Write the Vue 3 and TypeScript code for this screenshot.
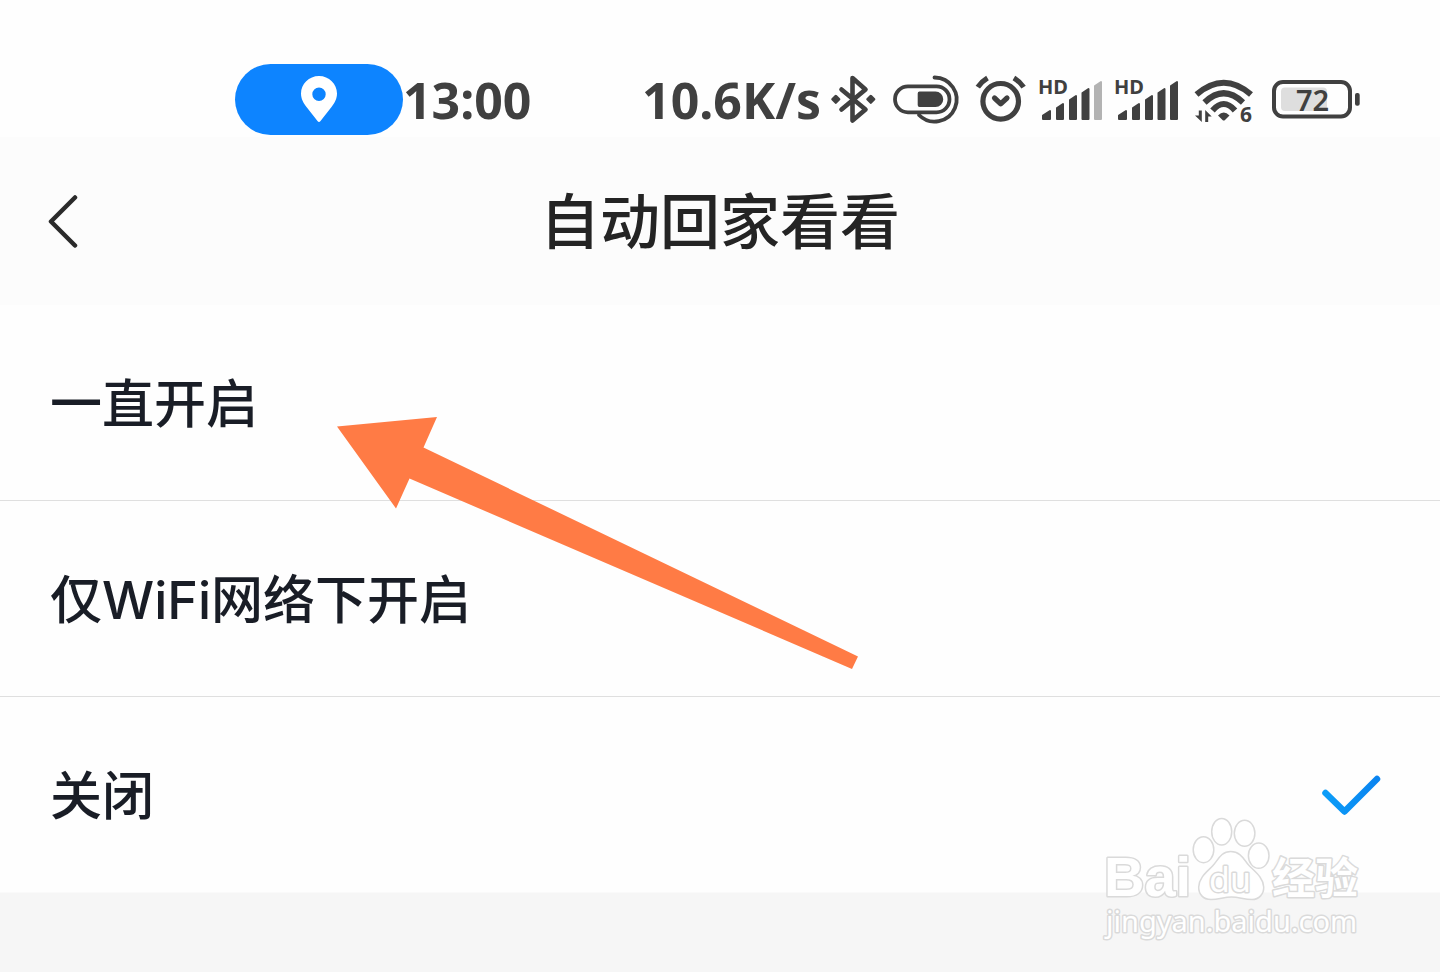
<script setup lang="ts">
import { ref } from 'vue'

interface Option {
  value: string
  label: string
}

const options: Option[] = [
  { value: 'always', label: '一直开启' },
  { value: 'wifi', label: '仅WiFi网络下开启' },
  { value: 'off', label: '关闭' },
]
const selected = ref<string>('off')

const bars: string[] = [
  'M5 47V43.500L12 39V47Z',
  'M19 47V36L25 32V47Z',
  'M32 47V28L38 24V47Z',
  'M44.500 47V21L50.500 17V47Z',
  'M57 47V14L63 10V47Z',
]
const sims: number[] = [4, 5]
</script>

<template>
  <div class="page">
    <div class="status">
      <div class="status-left">
        <span class="pill">
          <svg width="40" height="50" viewBox="0 0 40 50" aria-hidden="true">
            <path fill="#fff" fill-rule="evenodd" d="M20 1C10 1 2 9 2 18.500C2 24 4.500 28 7.500 32L18.500 46Q20 48 21.500 46L32.500 32C35.500 28 38 24 38 18.500C38 9 30 1 20 1ZM20 12.500A6.700 6.700 0 1 1 20 25.900A6.700 6.700 0 1 1 20 12.500Z" />
          </svg>
        </span>
        <span class="status-text">13:00</span>
      </div>
      <div class="status-right">
        <span class="status-text">10.6K/s</span>
        <svg width="47" height="56" viewBox="0 0 47 56" aria-hidden="true">
          <path d="M10.500 17.500L34.500 37.500L21.500 48.500V6L34.500 17.500L10.500 37.500" fill="none" stroke="#404040" stroke-width="4.600" stroke-linecap="round" stroke-linejoin="round" />
          <path d="M1.800 27.300L4.800 24.300L7.800 27.300L4.800 30.300ZM36.800 27.300L39.800 24.300L42.800 27.300L39.800 30.300Z" fill="#404040" stroke="#404040" stroke-width="3" stroke-linejoin="round" />
        </svg>
        <svg width="76" height="56" viewBox="0 0 76 56" aria-hidden="true">
          <g fill="none" stroke="#404040" stroke-width="3.800" stroke-linecap="round">
            <rect x="7" y="14.300" width="54.500" height="26" rx="13" />
            <path d="M46.500 5.500A22 22 0 1 1 31 43" />
          </g>
          <path fill="#404040" d="M31.500 19.500H47.500A7.700 7.700 0 0 1 47.500 35H31.500Q29.700 35 29.700 33V21.500Q29.700 19.500 31.500 19.500Z" />
        </svg>
        <svg width="54" height="56" viewBox="0 0 54 56" aria-hidden="true">
          <g fill="none" stroke="#404040" stroke-width="5.200" stroke-linejoin="round">
            <circle cx="26.700" cy="29.300" r="17.800" />
            <path d="M3.800 15.200Q7.500 9.500 13.500 6M39.900 6Q45.900 9.500 49.600 15.200" />
            <path d="M20.500 26L26.700 31.800L33 26" stroke-linecap="round" />
          </g>
        </svg>
        <svg v-for="active in sims" :key="active" width="66" height="56" viewBox="0 0 66 56" aria-hidden="true">
          <text class="icon-text" x="0" y="22" font-size="20">HD</text>
          <path v-for="(bar, i) in bars" :key="bar" :d="bar" :fill="i < active ? '#404040' : '#b3b3b3'" :stroke="i < active ? '#404040' : '#b3b3b3'" stroke-width="2" stroke-linejoin="round" />
        </svg>
        <svg width="68" height="56" viewBox="0 0 68 56" aria-hidden="true">
          <g fill="none" stroke="#404040" stroke-width="6">
            <path d="M6.500 22.500Q33.700 -1 61 22.500" />
            <path d="M14.500 30.500Q33.700 12 53 30.500" />
            <path d="M22.500 38.500Q33.700 25.500 45 38.500" />
          </g>
          <path fill="#404040" d="M28 43.500Q33.700 37.500 39.500 43.500L35 48Q33.700 49.200 32.500 48Z" />
          <path fill="#404040" d="M8.800 38.500H11.800V50L5 43.500H8.800ZM15.200 50H18.200V44.500H21.700L15.200 38Z" />
          <text class="icon-text" x="50" y="50" font-size="21">6</text>
        </svg>
        <svg width="92" height="56" viewBox="0 0 92 56" aria-hidden="true">
          <rect x="6" y="10" width="76" height="34.500" rx="9" fill="none" stroke="#404040" stroke-width="4" />
          <rect x="13" y="15.500" width="46" height="23.500" rx="4" fill="#dedede" />
          <rect x="87" y="21" width="4.700" height="12.700" rx="2" fill="#404040" />
          <text class="icon-text charge" x="28" y="39" font-size="29">72</text>
        </svg>
      </div>
    </div>

    <header class="header">
      <button class="back" type="button" aria-label="返回">
        <svg width="32" height="56" viewBox="0 0 32 56" aria-hidden="true">
          <path d="M27 4.500L3 28.500L27 52.500" fill="none" stroke="#2a2a2a" stroke-width="4.500" stroke-linecap="round" stroke-linejoin="round" />
        </svg>
      </button>
      <h1 class="title">自动回家看看</h1>
    </header>

    <main class="list" role="radiogroup" aria-label="自动回家看看">
      <label v-for="option in options" :key="option.value" class="row" :for="option.value">
        <span class="row-label">{{ option.label }}</span>
        <input :id="option.value" v-model="selected" class="radio" type="radio" name="auto-view" :value="option.value" />
        <svg v-if="selected === option.value" class="check" width="64" height="48" viewBox="0 0 64 48" aria-hidden="true">
          <defs>
            <linearGradient id="tick" x1="0" x2="1" y1="0" y2="0">
              <stop offset="0" stop-color="#0c9df8" />
              <stop offset="1" stop-color="#0a84f0" />
            </linearGradient>
          </defs>
          <path d="M5.500 22L24.500 40.500L57 8" fill="none" stroke="url(#tick)" stroke-width="6.500" stroke-linecap="round" stroke-linejoin="round" />
        </svg>
      </label>
      <svg class="pointer" width="521" height="252" viewBox="0 0 521 252" aria-hidden="true">
        <path fill="#ff7b45" d="M0 9.500L100 0L86.500 30.500L521 239.500L515 252L72.500 61.500L59 91.500Z" />
      </svg>
    </main>

    <div class="rest"></div>

    <svg class="watermark" width="264" height="132" viewBox="0 0 264 132" role="img" aria-label="Baidu经验 jingyan.baidu.com">
      <g fill="#fff" stroke="#dadada" stroke-width="1.500">
        <ellipse cx="103.500" cy="35.700" rx="10.300" ry="13" />
        <ellipse cx="121.700" cy="17.700" rx="10" ry="13.300" />
        <ellipse cx="144.600" cy="19.300" rx="10.300" ry="13" />
        <ellipse cx="158.700" cy="41.700" rx="10.300" ry="12.600" />
        <path d="M130.700 37.500C121 37.500 118 46 113 51.500C108 57 99 63 98.700 73C98.500 80 103 85.500 111 85.500C119 85.500 124 83 131.500 83C139 83 144 85.500 152 85.500C159 85.500 164 80 163.700 73C163.300 63 154 57 149 51.500C144 46 141 37.500 130.700 37.500Z" />
      </g>
      <g class="mark-text">
        <text class="mark-latin" x="4" y="82" font-size="56">Bai</text>
        <text class="mark-du" x="109" y="78" font-size="34">du</text>
        <text class="mark-cjk" x="172" y="80" font-size="43">经验</text>
        <text class="mark-url" x="6" y="118" font-size="29">jingyan.baidu.com</text>
      </g>
    </svg>
  </div>
</template>

<style>
body {
  margin: 0;
  background: #f6f6f6;
}
</style>

<style scoped>
.page {
  position: relative;
  display: flex;
  flex-direction: column;
  min-height: 100vh;
  overflow: hidden;
  background: #fefefe;
  font-family: Inter, "Noto Sans CJK SC", sans-serif;
}
svg {
  display: block;
  flex: none;
}
.status {
  display: flex;
  justify-content: space-between;
  align-items: center;
  box-sizing: border-box;
  height: 137px;
  padding: 62px 80px 0 235px;
}
.status-left,
.status-right {
  display: flex;
  align-items: center;
}
.status-right {
  gap: 10px;
}
.pill {
  display: flex;
  align-items: center;
  justify-content: center;
  width: 168px;
  height: 71px;
  border-radius: 36px;
  background: #0d84ff;
}
.status-text {
  color: #404040;
  font: 700 50px/60px "Noto Sans", sans-serif;
}
.icon-text {
  fill: #404040;
  font-family: "Noto Sans", sans-serif;
  font-weight: 700;
}
.charge {
  font-weight: 600;
}
.header {
  display: grid;
  grid-template-columns: 1fr auto 1fr;
  align-items: center;
  height: 168px;
  padding: 0 48px;
  background: #fcfcfc;
}
.back {
  justify-self: start;
  padding: 0;
  border: 0;
  background: none;
  cursor: pointer;
}
.title {
  margin: 0;
  padding-top: 2px;
  color: #242424;
  font-size: 60px;
  font-weight: 500;
  line-height: 84px;
}
.list {
  position: relative;
  border-bottom: 1px solid #fafafa;
}
.row {
  display: flex;
  align-items: center;
  justify-content: space-between;
  height: 195px;
  padding: 0 56px 0 50px;
  cursor: pointer;
}
.row + .row {
  border-top: 1px solid #dfdfdf;
}
.row-label {
  padding-top: 4px;
  color: #191d26;
  font-size: 52px;
  font-weight: 500;
  line-height: 72px;
}
.radio {
  position: absolute;
  margin: 0;
  opacity: 0;
}
.pointer {
  position: absolute;
  top: 112px;
  left: 337px;
  pointer-events: none;
}
.rest {
  flex: 1;
  background: #f6f6f6;
}
.watermark {
  position: absolute;
  right: 76px;
  bottom: 26px;
  pointer-events: none;
}
.mark-text {
  fill: #fff;
  stroke: #dadada;
  stroke-width: 3px;
  stroke-linejoin: round;
  paint-order: stroke;
  font-weight: 700;
}
.mark-latin {
  font-family: "Liberation Sans", sans-serif;
}
.mark-du {
  font-family: "Noto Sans", sans-serif;
  font-weight: 400;
}
.mark-cjk {
  font-family: "Noto Sans CJK SC", sans-serif;
}
.mark-url {
  font-family: "Noto Sans", sans-serif;
  font-weight: 400;
}
</style>
